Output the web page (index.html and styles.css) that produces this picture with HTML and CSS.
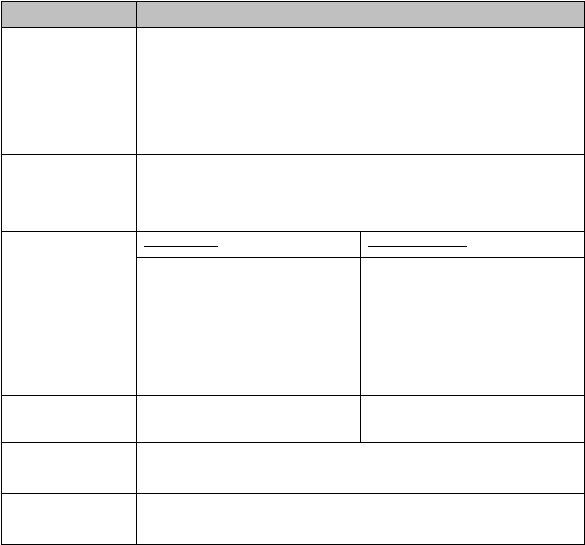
FILE: index.html
```html
<!DOCTYPE html>
<html lang="en">
<head>
  <meta charset="UTF-8" />
  <meta name="viewport" content="width=device-width, initial-scale=1" />
  <title>Form</title>
  <link rel="stylesheet" href="styles.css">
</head>
<body>
  <table class="form-table">
    <colgroup>
      <col class="col-label" />
      <col class="col-half" />
      <col class="col-half" />
    </colgroup>
    <thead>
      <tr class="row-head">
        <th></th>
        <th colspan="2"></th>
      </tr>
    </thead>
    <tbody>
      <tr class="row-1">
        <td></td>
        <td colspan="2"></td>
      </tr>
      <tr class="row-2">
        <td></td>
        <td colspan="2"></td>
      </tr>
      <!-- 두 칸으로 나뉘는 구간 -->
      <tr class="row-sub-head">
        <td rowspan="2"></td>
        <td><span class="blank blank-short"></span></td>
        <td><span class="blank blank-long"></span></td>
      </tr>
      <tr class="row-3">
        <td></td>
        <td></td>
      </tr>
      <tr class="row-4">
        <td></td>
        <td></td>
        <td></td>
      </tr>
      <tr class="row-5">
        <td></td>
        <td colspan="2"></td>
      </tr>
      <tr class="row-6">
        <td></td>
        <td colspan="2"></td>
      </tr>
    </tbody>
  </table>
</body>
</html>
```

FILE: styles.css
```css
body {
  margin: 0;
  padding: 1px 0 0 1px;
  background: #fff;
  font-family: 'Liberation Sans', Arial, sans-serif;
  font-size: 13px;
  color: #000;
}

.form-table {
  border-collapse: collapse;
  table-layout: fixed;
  width: 583px;
}

.col-label {
  width: 135px;
}

.col-half {
  width: 224px;
}

.form-table th,
.form-table td {
  border: 1px solid #000;
  padding: 0 0 0 7px;
  vertical-align: top;
}

.form-table th {
  background: #c0c0c0;
}

.row-head th { height: 25px; }
.row-1 td { height: 126px; }
.row-2 td { height: 76px; }
.row-sub-head td { height: 25px; }
.row-3 td { height: 137px; }
.row-4 td { height: 46px; }
.row-5 td { height: 50px; }
.row-6 td { height: 50px; }

.blank {
  display: block;
  margin-top: 14px;
  border-bottom: 1px solid #000;
}

.blank-short {
  width: 74px;
}

.blank-long {
  width: 99px;
}
```
